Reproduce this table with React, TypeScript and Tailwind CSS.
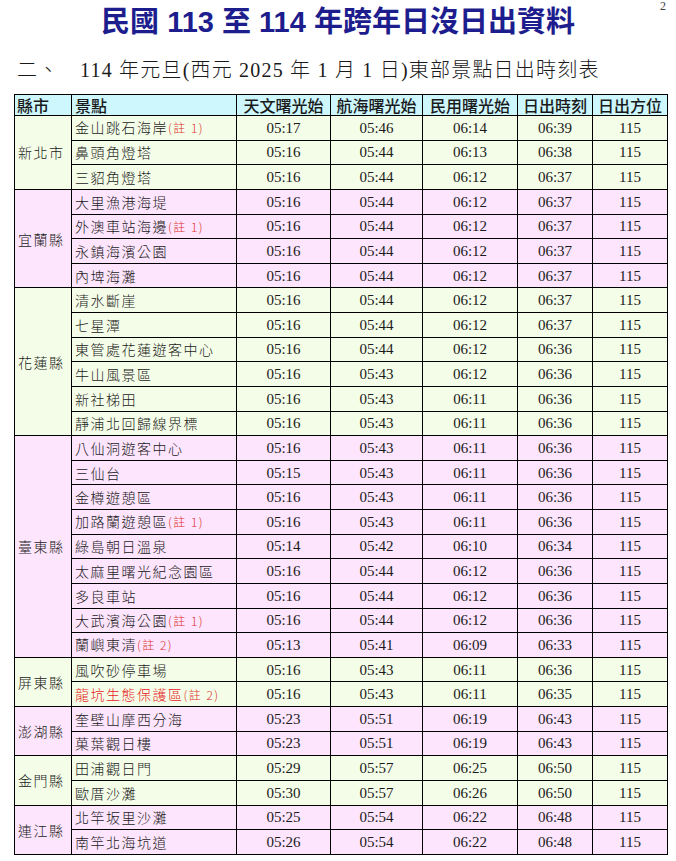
import React from "react";

type Row = { name: string; note?: string; red?: boolean; t: [string, string, string, string] };
type Group = { county: string; bg: string; rows: Row[] };

const G = "bg-[#f4fde8]";
const P = "bg-[#fde5fd]";

const groups: Group[] = [
  {
    county: "新北市",
    bg: G,
    rows: [
      { name: "金山跳石海岸", note: "1", t: ["05:17", "05:46", "06:14", "06:39"] },
      { name: "鼻頭角燈塔", t: ["05:16", "05:44", "06:13", "06:38"] },
      { name: "三貂角燈塔", t: ["05:16", "05:44", "06:12", "06:37"] },
    ],
  },
  {
    county: "宜蘭縣",
    bg: P,
    rows: [
      { name: "大里漁港海堤", t: ["05:16", "05:44", "06:12", "06:37"] },
      { name: "外澳車站海邊", note: "1", t: ["05:16", "05:44", "06:12", "06:37"] },
      { name: "永鎮海濱公園", t: ["05:16", "05:44", "06:12", "06:37"] },
      { name: "內埤海灘", t: ["05:16", "05:44", "06:12", "06:37"] },
    ],
  },
  {
    county: "花蓮縣",
    bg: G,
    rows: [
      { name: "清水斷崖", t: ["05:16", "05:44", "06:12", "06:37"] },
      { name: "七星潭", t: ["05:16", "05:44", "06:12", "06:37"] },
      { name: "東管處花蓮遊客中心", t: ["05:16", "05:44", "06:12", "06:36"] },
      { name: "牛山風景區", t: ["05:16", "05:43", "06:12", "06:36"] },
      { name: "新社梯田", t: ["05:16", "05:43", "06:11", "06:36"] },
      { name: "靜浦北回歸線界標", t: ["05:16", "05:43", "06:11", "06:36"] },
    ],
  },
  {
    county: "臺東縣",
    bg: P,
    rows: [
      { name: "八仙洞遊客中心", t: ["05:16", "05:43", "06:11", "06:36"] },
      { name: "三仙台", t: ["05:15", "05:43", "06:11", "06:36"] },
      { name: "金樽遊憩區", t: ["05:16", "05:43", "06:11", "06:36"] },
      { name: "加路蘭遊憩區", note: "1", t: ["05:16", "05:43", "06:11", "06:36"] },
      { name: "綠島朝日溫泉", t: ["05:14", "05:42", "06:10", "06:34"] },
      { name: "太麻里曙光紀念園區", t: ["05:16", "05:44", "06:12", "06:36"] },
      { name: "多良車站", t: ["05:16", "05:44", "06:12", "06:36"] },
      { name: "大武濱海公園", note: "1", t: ["05:16", "05:44", "06:12", "06:36"] },
      { name: "蘭嶼東清", note: "2", t: ["05:13", "05:41", "06:09", "06:33"] },
    ],
  },
  {
    county: "屏東縣",
    bg: G,
    rows: [
      { name: "風吹砂停車場", t: ["05:16", "05:43", "06:11", "06:36"] },
      { name: "龍坑生態保護區", note: "2", red: true, t: ["05:16", "05:43", "06:11", "06:35"] },
    ],
  },
  {
    county: "澎湖縣",
    bg: P,
    rows: [
      { name: "奎壁山摩西分海", t: ["05:23", "05:51", "06:19", "06:43"] },
      { name: "菓葉觀日樓", t: ["05:23", "05:51", "06:19", "06:43"] },
    ],
  },
  {
    county: "金門縣",
    bg: G,
    rows: [
      { name: "田浦觀日門", t: ["05:29", "05:57", "06:25", "06:50"] },
      { name: "歐厝沙灘", t: ["05:30", "05:57", "06:26", "06:50"] },
    ],
  },
  {
    county: "連江縣",
    bg: P,
    rows: [
      { name: "北竿坂里沙灘", t: ["05:25", "05:54", "06:22", "06:48"] },
      { name: "南竿北海坑道", t: ["05:26", "05:54", "06:22", "06:48"] },
    ],
  },
];

const cjk = "font-['Noto_Sans_CJK_TC',sans-serif]";
const serifNum = "font-['Liberation_Serif','Times_New_Roman',serif]";

export default function App() {
  return (
    <div className="relative w-[676px] h-[861px] bg-white overflow-hidden text-[#1a1a1a]">
      <div className={`absolute right-[10px] top-[-3px] text-[12px] text-[#444] ${serifNum}`}>2</div>
      <h1 className="mt-[4px] text-center text-[29px] leading-[36px] font-bold text-[#1d1d8e] font-['Liberation_Sans','Noto_Sans_CJK_TC',sans-serif]">
        民國 113 至 114 年跨年日沒日出資料
      </h1>
      <div className="mt-[16px] flex items-center pl-[17px] h-[28px] text-[20px] leading-[28px] tracking-[1.2px] font-['Liberation_Serif','Noto_Sans_CJK_TC',serif] font-light">
        <span className="w-[63px]">二、</span>
        <span>114 年元旦(西元 2025 年 1 月 1 日)東部景點日出時刻表</span>
      </div>
      <table className="ml-[14px] mt-[10px] table-fixed border-collapse w-[653px]">
        <colgroup>
          <col className="w-[57px]" />
          <col className="w-[165px]" />
          <col className="w-[94px]" />
          <col className="w-[92px]" />
          <col className="w-[95px]" />
          <col className="w-[75px]" />
          <col className="w-[75px]" />
        </colgroup>
        <thead>
          <tr className={`h-[21px] bg-[#cdf6fd] text-[16px] leading-[19px] font-medium ${cjk}`}>
            <th className="border border-black text-left pl-[2px] p-0 font-medium">縣市</th>
            <th className="border border-black text-left pl-[3px] p-0 font-medium">景點</th>
            <th className="border border-black text-center p-0 font-medium">天文曙光始</th>
            <th className="border border-black text-center p-0 font-medium">航海曙光始</th>
            <th className="border border-black text-center p-0 font-medium">民用曙光始</th>
            <th className="border border-black text-center p-0 font-medium">日出時刻</th>
            <th className="border border-black text-center p-0 font-medium">日出方位</th>
          </tr>
        </thead>
        <tbody>
          {groups.map((g) =>
            g.rows.map((r, i) => (
              <tr key={g.county + r.name} className={`h-[24.63px] ${g.bg}`}>
                {i === 0 && (
                  <td
                    rowSpan={g.rows.length}
                    className={`border border-black p-0 pl-[3px] text-[14px] tracking-[1.5px] leading-[18px] font-light ${cjk}`}
                  >
                    {g.county}
                  </td>
                )}
                <td
                  className={`border border-black p-0 pl-[3px] text-[14px] tracking-[1.5px] leading-[18px] whitespace-nowrap font-light ${cjk} ${
                    r.red ? "text-[#e8231c]" : ""
                  }`}
                >
                  {r.name}
                  {r.note && (
                    <span className="text-[#e0302a] text-[12px] tracking-[1.5px]">(註 {r.note})</span>
                  )}
                </td>
                {r.t.map((v, k) => (
                  <td
                    key={k}
                    className={`border border-black p-0 text-center text-[15px] leading-[18px] ${serifNum}`}
                  >
                    {v}
                  </td>
                ))}
                <td className={`border border-black p-0 text-center text-[15px] leading-[18px] ${serifNum}`}>
                  115
                </td>
              </tr>
            ))
          )}
        </tbody>
      </table>
    </div>
  );
}
